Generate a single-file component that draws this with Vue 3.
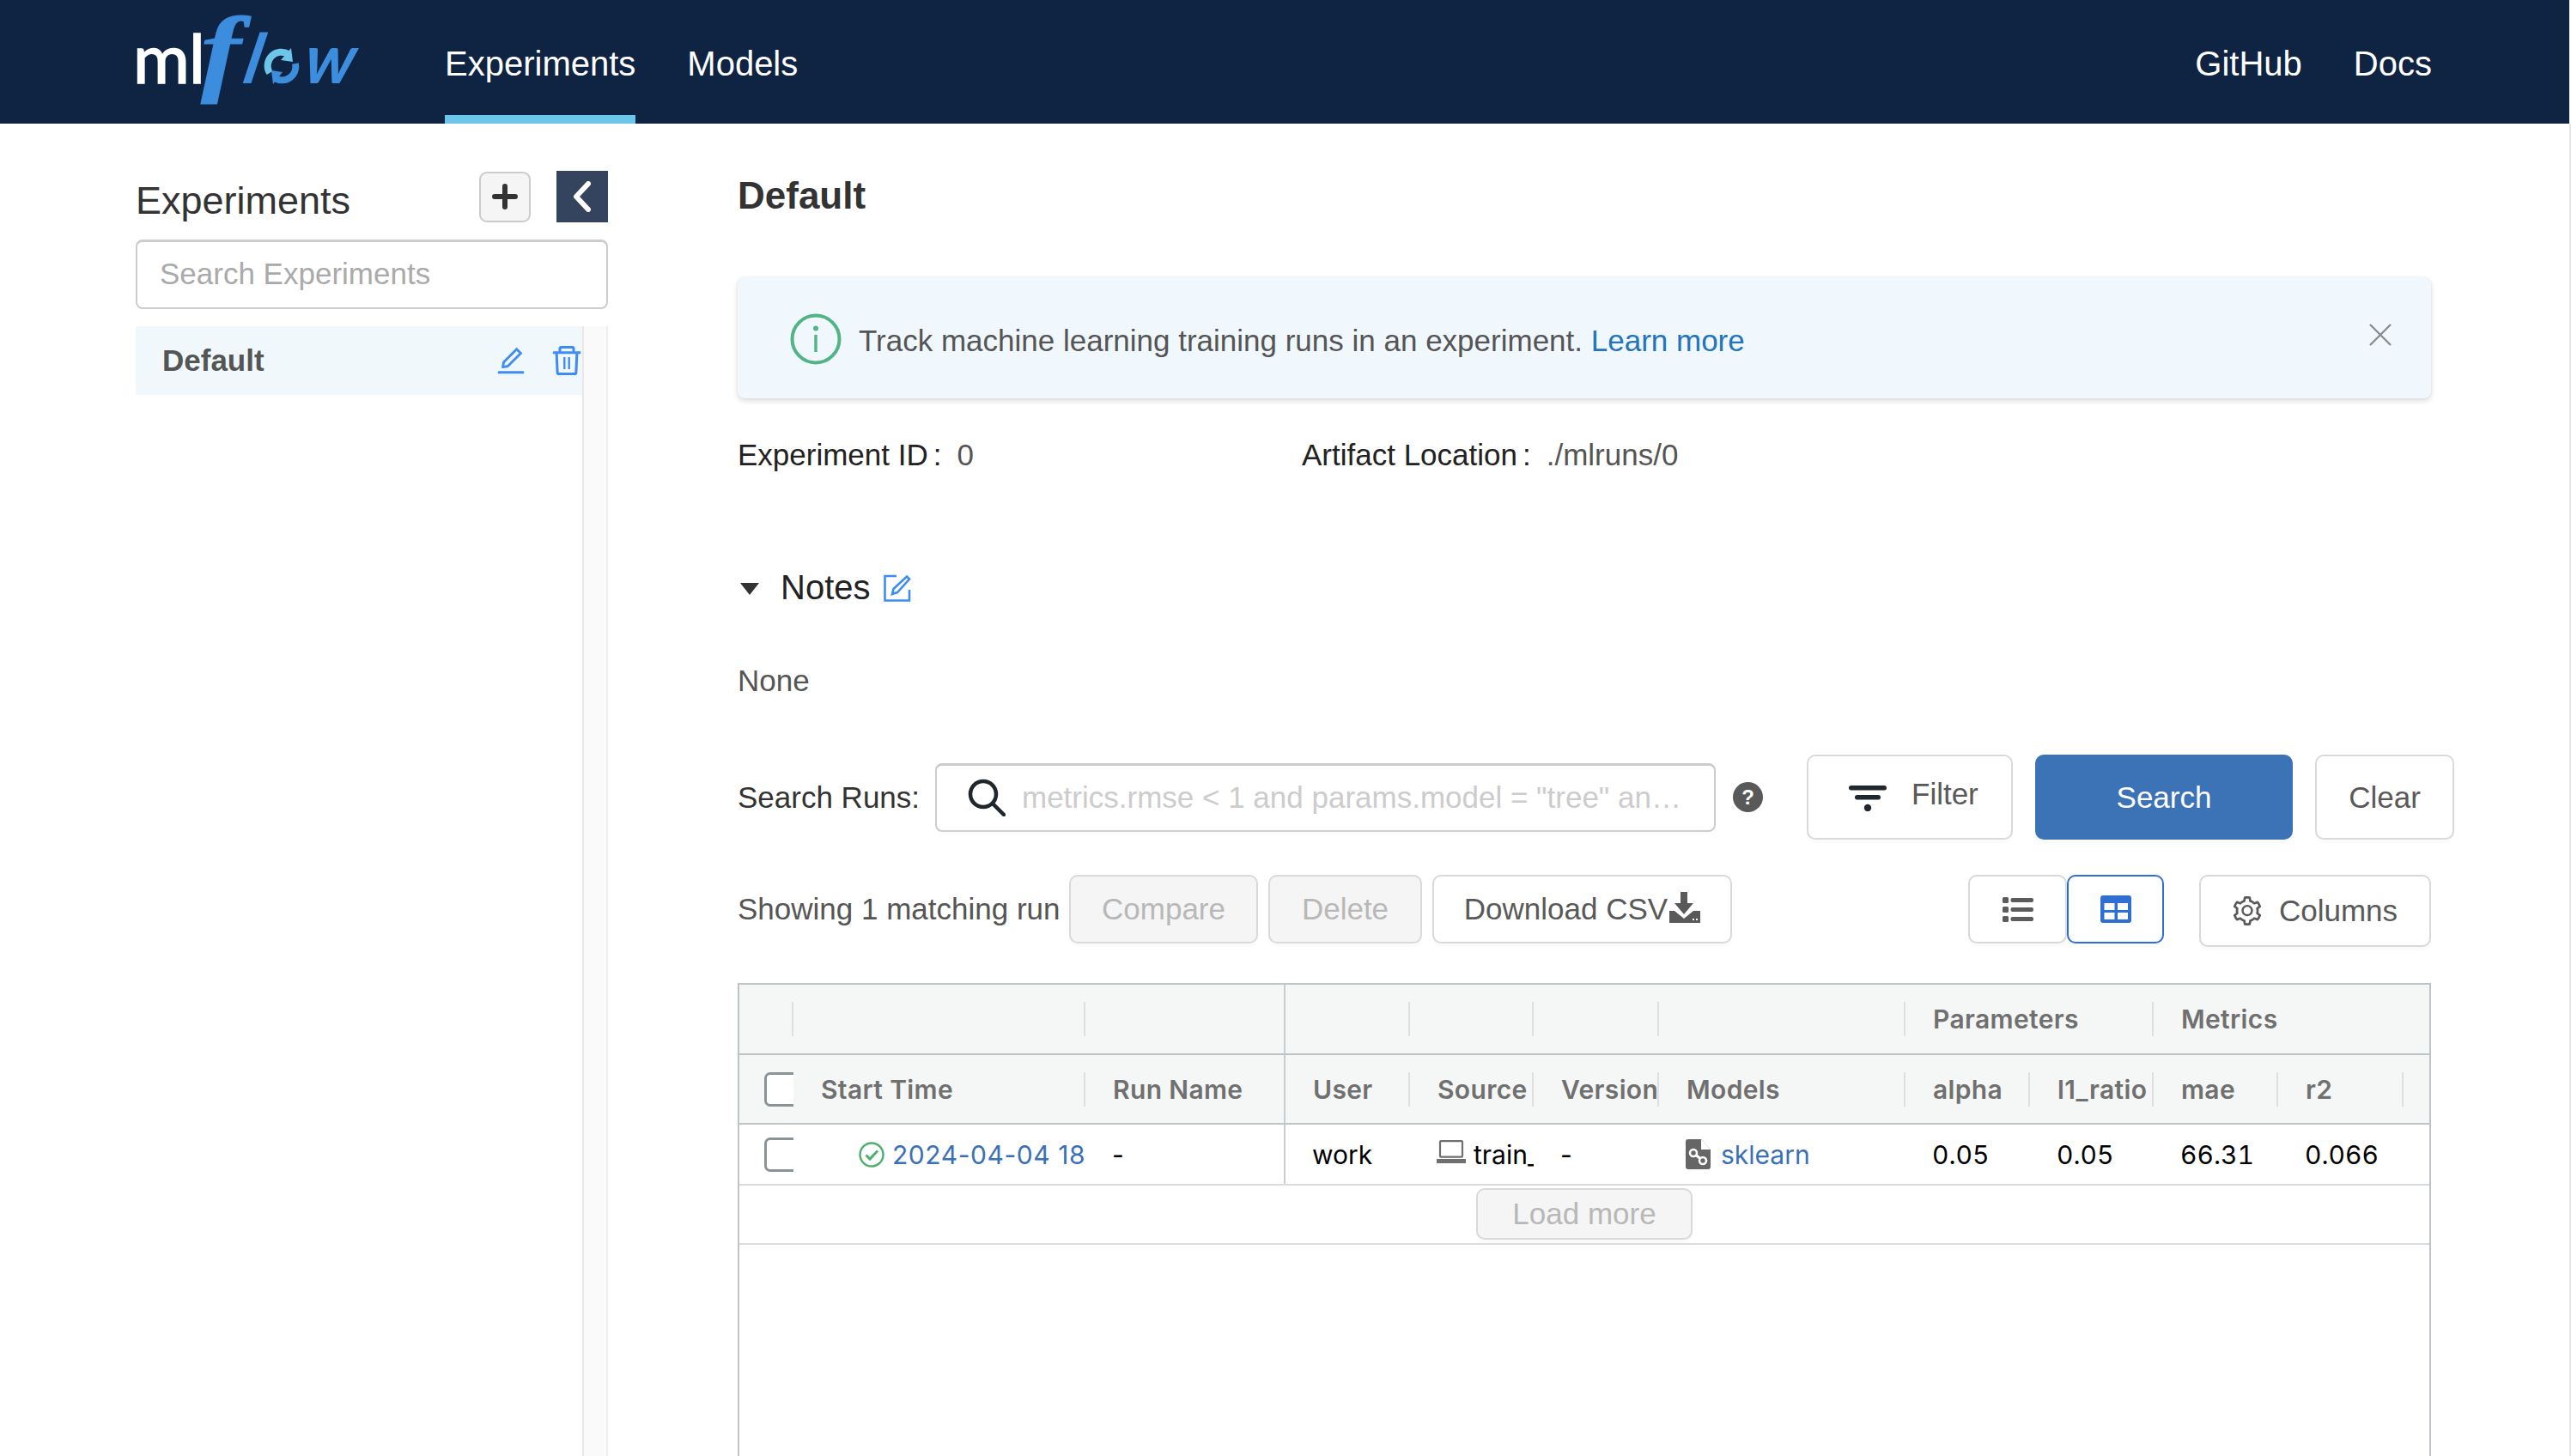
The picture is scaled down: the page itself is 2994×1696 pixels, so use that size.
<script setup>
const cols = [63, 340, 233, 145, 144, 146, 287, 145, 144, 145, 146, 32]
const gridCols = cols.map((c) => c + 'px').join(' ')
const groupRow = [
  { span: 1, sep: true },
  { span: 1, sep: true },
  { span: 1, pin: true },
  { span: 1, sep: true },
  { span: 1, sep: true },
  { span: 1, sep: true },
  { span: 1, sep: true },
  { span: 2, sep: true, label: 'Parameters' },
  { span: 3, label: 'Metrics' }
]
const headRow = [
  { label: 'Start Time', sep: true },
  { label: 'Run Name', pin: true },
  { label: 'User', sep: true },
  { label: 'Source', sep: true },
  { label: 'Version', sep: true },
  { label: 'Models', sep: true },
  { label: 'alpha', sep: true },
  { label: 'l1_ratio', sep: true },
  { label: 'mae', sep: true },
  { label: 'r2', sep: true },
  { label: '' }
]
const values = ['0.05', '0.05', '66.31', '0.066']
</script>

<template>
  <div class="page">
    <header class="topbar">
      <svg class="logo" viewBox="158 0 262 144" width="262" height="144">
        <text x="155" y="97" font-family="Lato" font-size="80" font-weight="400" fill="#fff" stroke="#fff" stroke-width="1.6" textLength="84">ml</text>
        <text transform="translate(234 97) scale(1.25 1)" font-family="Liberation Serif" font-style="italic" font-size="112" font-weight="700" fill="#3c8ddd" stroke="#3c8ddd" stroke-width="1">f</text>
        <text transform="translate(281 97) skewX(-12)" font-family="Lato" font-style="italic" font-weight="700" font-size="80" fill="#3c8ddd">l</text>
        <path d="M336 63A16 16 0 0 0 314 85" fill="none" stroke="#6cc6ea" stroke-width="8" />
        <path d="M320 91A16 16 0 0 0 344 74" fill="none" stroke="#3c8ddd" stroke-width="8" />
        <polygon points="327,70 339,56 341,72" fill="#6cc6ea" />
        <polygon points="329,84 318,98 316,82" fill="#3c8ddd" />
        <text transform="translate(352 97) skewX(-8)" font-family="Lato" font-style="italic" font-weight="700" font-size="80" fill="#3c8ddd" textLength="70">w</text>
      </svg>
      <nav class="nav">
        <a class="nav-item active">Experiments</a>
        <a class="nav-item">Models</a>
      </nav>
      <nav class="nav nav-right">
        <a class="nav-item">GitHub</a>
        <a class="nav-item">Docs</a>
      </nav>
    </header>

    <div class="body">
      <aside class="sidebar">
        <div class="side-head">
          <span class="side-title">Experiments</span>
          <button class="plus">
            <svg viewBox="0 0 30 30" width="30" height="30"><path d="M15 3v24M3 15h24" stroke="#333" stroke-width="6" stroke-linecap="round" /></svg>
          </button>
          <button class="collapse">
            <svg viewBox="0 0 24 36" width="24" height="36"><path d="M19 3 5 18l14 15" fill="none" stroke="#fff" stroke-width="6" stroke-linecap="round" stroke-linejoin="round" /></svg>
          </button>
        </div>
        <div class="side-search">Search Experiments</div>
        <div class="side-list">
          <div class="side-row">
            <span class="side-name">Default</span>
            <svg class="edit-ic" viewBox="64 64 896 896" width="34" height="34" fill="#3f8cf6"><path d="M257.7 752c2 0 4-.2 6-.5L431.9 722c2-.4 3.9-1.3 5.3-2.8l423.9-423.9a9.96 9.96 0 0 0 0-14.1L694.9 114.9c-1.9-1.9-4.4-2.9-7.1-2.9s-5.2 1-7.1 2.9L256.8 538.8c-1.5 1.5-2.4 3.3-2.8 5.3l-29.5 168.2a33.5 33.5 0 0 0 9.4 29.8c6.6 6.4 14.9 9.9 23.8 9.9zm67.4-174.4L687.8 215l73.3 73.3-362.7 362.6-88.9 15.7 15.6-89zM880 836H144c-17.7 0-32 14.3-32 32v36c0 4.4 3.6 8 8 8h784c4.4 0 8-3.6 8-8v-36c0-17.7-14.3-32-32-32z" /></svg>
            <svg class="trash-ic" viewBox="64 64 896 896" width="38" height="38" fill="#3f8cf6"><path d="M360 184h-8c4.4 0 8-3.6 8-8v8h304v-8c0 4.4 3.6 8 8 8h-8v72h72v-80c0-35.3-28.7-64-64-64H352c-35.3 0-64 28.7-64 64v80h72v-72zm504 72H160c-17.7 0-32 14.3-32 32v32c0 4.4 3.6 8 8 8h60.4l24.7 523c1.6 34.1 29.8 61 63.9 61h454c34.2 0 62.3-26.8 63.9-61l24.7-523H888c4.4 0 8-3.6 8-8v-36c0-17.7-14.3-32-32-32zM731.3 840H292.7l-24.2-512h487l-24.2 512z" /><path d="M420 420h56v330h-56zM548 420h56v330h-56z" /></svg>
          </div>
          <div class="side-track"></div>
        </div>
      </aside>

      <main class="main">
        <h1 class="title">Default</h1>

        <div class="alert">
          <svg class="alert-ic" viewBox="0 0 60 60" width="60" height="60">
            <circle cx="30" cy="30" r="27.5" fill="none" stroke="#52b385" stroke-width="4" />
            <circle cx="30" cy="17.5" r="3" fill="#52b385" />
            <rect x="28.3" y="25" width="3.4" height="20" fill="#52b385" />
          </svg>
          <span class="alert-text">Track machine learning training runs in an experiment. <a class="alert-link">Learn more</a></span>
          <svg class="alert-close" viewBox="0 0 26 26" width="26" height="26"><path d="M1 1l24 24M25 1 1 25" stroke="#8c8c8c" stroke-width="2.4" /></svg>
        </div>

        <div class="info">
          <div class="info-a">
            <span class="info-k">Experiment ID</span><span class="info-c">:</span><span class="info-v">0</span>
          </div>
          <div class="info-b">
            <span class="info-k">Artifact Location</span><span class="info-c">:</span><span class="info-v">./mlruns/0</span>
          </div>
        </div>

        <div class="notes">
          <svg class="caret" viewBox="0 0 22 14" width="22" height="14"><path d="M0 0h22L11 14z" fill="#333" /></svg>
          <span class="notes-t">Notes</span>
          <svg class="notes-ic" viewBox="0 0 32 32" width="32" height="32" fill="none" stroke="#3f8cf6" stroke-width="2.6">
            <path d="M15 2H1.5v28.5H30V18" />
            <path d="M27 2.5l3 3L16 21l-6 2 1.5-6z" />
          </svg>
        </div>

        <div class="none">None</div>

        <div class="search-row">
          <span class="search-label">Search Runs:</span>
          <div class="search-box">
            <svg class="search-ic" viewBox="0 0 44 44" width="44" height="44" fill="none" stroke="#1f272d" stroke-width="4.5">
              <circle cx="18" cy="18" r="15" />
              <path d="M29 29l13 13" stroke-linecap="round" />
            </svg>
            <span class="search-ph">metrics.rmse &lt; 1 and params.model = "tree" an…</span>
          </div>
          <span class="help">?</span>
          <button class="btn filter">
            <svg viewBox="0 0 44 30" width="44" height="30" fill="#20272d">
              <rect x="0" y="0" width="44" height="5.5" rx="2.7" />
              <rect x="7" y="11" width="30" height="5.5" rx="2.7" />
              <circle cx="22" cy="26" r="4.2" />
            </svg>
            <span class="filter-t">Filter</span>
          </button>
          <button class="btn primary">Search</button>
          <button class="btn clear">Clear</button>
        </div>

        <div class="tool-row">
          <span class="showing">Showing 1 matching run</span>
          <button class="btn disabled compare">Compare</button>
          <button class="btn disabled del">Delete</button>
          <button class="btn download">
            <span>Download CSV</span>
            <svg viewBox="0 0 36 36" width="36" height="36" fill="#595959">
              <path d="M13 0h8v13h7L17 26 6 13h7z" />
              <path d="M0 22h6l11 9 11-9h8v14H0z" />
              <rect x="27" y="31" width="2" height="2" fill="#fff" />
              <rect x="31" y="31" width="2" height="2" fill="#fff" />
            </svg>
          </button>
          <button class="btn toggle list">
            <svg viewBox="0 0 36 30" width="36" height="30" fill="#5c5c5c">
              <rect x="0" y="1" width="7" height="7" rx="1.5" /><rect x="9.5" y="2" width="26.5" height="5" rx="2" />
              <rect x="0" y="12" width="7" height="7" rx="1.5" /><rect x="9.5" y="13" width="26.5" height="5" rx="2" />
              <rect x="0" y="23" width="7" height="7" rx="1.5" /><rect x="9.5" y="24" width="26.5" height="5" rx="2" />
            </svg>
          </button>
          <button class="btn toggle table-t">
            <svg viewBox="0 0 36 32" width="36" height="32">
              <rect width="36" height="32" rx="3" fill="#2e6fd6" />
              <rect x="4.5" y="9" width="12" height="8" fill="#fff" />
              <rect x="20" y="9" width="12" height="8" fill="#fff" />
              <rect x="4.5" y="20" width="12" height="8" fill="#fff" />
              <rect x="20" y="20" width="12" height="8" fill="#fff" />
            </svg>
          </button>
          <button class="btn columns">
            <svg viewBox="64 64 896 896" width="34" height="34" fill="#595959"><path d="M924.8 625.7l-65.5-56c3.1-19 4.7-38.4 4.7-57.8s-1.6-38.8-4.7-57.8l65.5-56a32.03 32.03 0 0 0 9.3-35.2l-.9-2.6a443.74 443.74 0 0 0-79.7-137.9l-1.8-2.1a32.12 32.12 0 0 0-35.1-9.5l-81.3 28.9c-30-24.6-63.5-44-99.7-57.6l-15.7-85a32.05 32.05 0 0 0-25.8-25.7l-2.7-.5c-52.1-9.4-106.9-9.4-159 0l-2.7.5a32.05 32.05 0 0 0-25.8 25.7l-15.8 85.4a351.86 351.86 0 0 0-99 57.4l-81.9-29.1a32 32 0 0 0-35.1 9.5l-1.8 2.1a446.02 446.02 0 0 0-79.7 137.9l-.9 2.6c-4.5 12.5-.8 26.5 9.3 35.2l66.3 56.6c-3.1 18.8-4.6 38-4.6 57.1 0 19.2 1.5 38.4 4.6 57.1L99 625.5a32.03 32.03 0 0 0-9.3 35.2l.9 2.6c18.1 50.4 44.9 96.9 79.7 137.9l1.8 2.1a32.12 32.12 0 0 0 35.1 9.5l81.9-29.1c29.8 24.5 63.1 43.9 99 57.4l15.8 85.4a32.05 32.05 0 0 0 25.8 25.7l2.7.5a449.4 449.4 0 0 0 159 0l2.7-.5a32.05 32.05 0 0 0 25.8-25.7l15.7-85a350 350 0 0 0 99.7-57.6l81.3 28.9a32 32 0 0 0 35.1-9.5l1.8-2.1c34.8-41.1 61.6-87.5 79.7-137.9l.9-2.6c4.5-12.3.8-26.3-9.3-35zM788.3 465.9c2.5 15.1 3.8 30.6 3.8 46.1s-1.3 31-3.8 46.1l-6.6 40.1 74.7 63.9a370.03 370.03 0 0 1-42.6 73.6L721 702.8l-31.4 25.8c-23.9 19.6-50.5 35-79.3 45.8l-38.1 14.3-17.9 97a377.5 377.5 0 0 1-85 0l-17.9-97.2-37.8-14.5c-28.5-10.8-55-26.2-78.7-45.7l-31.4-25.9-93.4 33.2c-17-22.9-31.2-47.6-42.6-73.6l75.5-64.5-6.5-40c-2.4-14.9-3.7-30.3-3.7-45.5 0-15.3 1.2-30.6 3.7-45.5l6.5-40-75.5-64.5c11.3-26.1 25.6-50.7 42.6-73.6l93.4 33.2 31.4-25.9c23.7-19.5 50.2-34.9 78.7-45.7l37.9-14.3 17.9-97.2c28.1-3.2 56.8-3.2 85 0l17.9 97 38.1 14.3c28.7 10.8 55.4 26.2 79.3 45.8l31.4 25.8 92.8-32.9c17 22.9 31.2 47.6 42.6 73.6L781.8 426l6.5 39.9zM512 326c-97.2 0-176 78.8-176 176s78.8 176 176 176 176-78.8 176-176-78.8-176-176-176zm79.2 255.2A111.6 111.6 0 0 1 512 614c-29.9 0-58-11.7-79.2-32.8A111.6 111.6 0 0 1 400 502c0-29.9 11.7-58 32.8-79.2C454 401.6 482.1 390 512 390c29.9 0 58 11.6 79.2 32.8A111.6 111.6 0 0 1 624 502c0 29.9-11.7 58-32.8 79.2z" /></svg>
            <span>Columns</span>
          </button>
        </div>

        <section class="grid">
          <div class="row head-row group" :style="{ gridTemplateColumns: gridCols }">
            <div
              v-for="(g, i) in groupRow"
              :key="i"
              class="cell"
              :class="{ sep: g.sep, pin: g.pin }"
              :style="{ gridColumn: 'span ' + g.span }"
            >{{ g.label }}</div>
          </div>
          <div class="row head-row labels" :style="{ gridTemplateColumns: gridCols }">
            <div class="cell check"><span class="box"></span></div>
            <div
              v-for="h in headRow"
              :key="h.label"
              class="cell"
              :class="{ sep: h.sep, pin: h.pin }"
            >{{ h.label }}</div>
          </div>
          <div class="row data-row" :style="{ gridTemplateColumns: gridCols }">
            <div class="cell check"><span class="box small"></span></div>
            <div class="cell time">
              <svg viewBox="0 0 30 30" width="30" height="30" fill="none" stroke="#4fb06d" stroke-width="2.4">
                <circle cx="15" cy="15" r="13.5" />
                <path d="M8.5 15.5l4.5 4.5 9-9.5" stroke-width="3" />
              </svg>
              <a class="link date">2024-04-04 18</a>
            </div>
            <div class="cell pin">-</div>
            <div class="cell">work</div>
            <div class="cell source">
              <svg viewBox="0 0 34 28" width="34" height="28" fill="none" stroke="#6f6f6f" stroke-width="2.2">
                <rect x="4" y="1.2" width="26" height="18.5" rx="1" />
                <path d="M0 24.5h34" stroke-width="5" />
              </svg>
              <span class="src-name">train_</span>
            </div>
            <div class="cell">-</div>
            <div class="cell models">
              <svg viewBox="0 0 29 35" width="29" height="35">
                <path d="M3 0h15l11 12v20a3 3 0 0 1-3 3H3a3 3 0 0 1-3-3V3a3 3 0 0 1 3-3z" fill="#666" />
                <path d="M18 0v12h11z" fill="#fff" />
                <path d="M9 16l11 9" stroke="#fff" stroke-width="3" />
                <circle cx="9" cy="16" r="4" fill="#666" stroke="#fff" stroke-width="2.6" />
                <circle cx="20" cy="25" r="4" fill="#666" stroke="#fff" stroke-width="2.6" />
              </svg>
              <a class="link">sklearn</a>
            </div>
            <div v-for="(v, i) in values" :key="i" class="cell num">{{ v }}</div>
            <div class="cell"></div>
          </div>
          <div class="load-row">
            <button class="btn disabled load">Load more</button>
          </div>
        </section>
      </main>
    </div>
  </div>
</template>

<style>
html,
body {
  margin: 0;
  background: #fff;
}
</style>

<style scoped>
.page {
  width: 2994px;
  height: 1696px;
  overflow: hidden;
  font-family: "Liberation Sans", Arial, sans-serif;
  font-size: 35px;
  color: #333;
  background: #fff;
  box-sizing: border-box;
}
.topbar {
  width: 2992px;
  height: 144px;
  background: #0f2342;
  display: flex;
  box-sizing: border-box;
  padding-left: 158px;
  padding-right: 160px;
}
.logo {
  flex: none;
  display: block;
}
.nav {
  display: flex;
  gap: 60px;
  margin-left: 98px;
}
.nav-right {
  margin-left: auto;
}
.nav-item {
  display: block;
  height: 144px;
  box-sizing: border-box;
  padding-top: 14px;
  line-height: 120px;
  border-bottom: 10px solid transparent;
  color: #fff;
  font-size: 40px;
}
.nav-item.active {
  border-bottom-color: #6cc5ea;
}
.body {
  display: flex;
  height: 1552px;
  border-right: 2px solid #e4e4e4;
  box-sizing: border-box;
}
.sidebar {
  flex: none;
  width: 550px;
  margin-left: 158px;
  display: flex;
  flex-direction: column;
}
.side-head {
  flex: none;
  display: flex;
  align-items: center;
  height: 60px;
  margin-top: 55px;
}
.side-title {
  font-size: 45px;
  flex: 1;
  padding-top: 10px;
  color: #333;
}
button {
  font-family: inherit;
  padding: 0;
  margin: 0;
  cursor: pointer;
}
.plus {
  width: 60px;
  height: 59px;
  border: 2px solid #ccc;
  border-radius: 9px;
  background: #f5f5f5;
  display: flex;
  align-items: center;
  justify-content: center;
}
.collapse {
  width: 60px;
  height: 60px;
  margin-left: 30px;
  border: none;
  background: #34435e;
  display: flex;
  align-items: center;
  justify-content: center;
}
.side-search {
  flex: none;
  margin-top: 20px;
  height: 81px;
  box-sizing: border-box;
  border: 2px solid #ccc;
  border-top-width: 3px;
  border-radius: 8px;
  padding-left: 26px;
  line-height: 73px;
  color: #aaa;
  font-size: 35px;
}
.side-list {
  display: flex;
  flex: 1;
  margin-top: 20px;
  align-items: flex-start;
  min-height: 0;
}
.side-row {
  flex: 1;
  height: 80px;
  display: flex;
  align-items: center;
  background: #f0f8fb;
  padding-left: 31px;
  box-sizing: border-box;
}
.side-name {
  flex: 1;
  font-weight: 700;
  font-size: 35px;
  color: #555;
}
.edit-ic {
  margin-right: 29px;
  flex: none;
}
.trash-ic {
  margin-right: -1px;
  flex: none;
}
.side-track {
  flex: none;
  width: 30px;
  height: 1400px;
  box-sizing: border-box;
  background: #fafafa;
  border-left: 2px solid #e8e8e8;
  border-right: 2px solid #eee;
}
.main {
  flex: none;
  width: 1972px;
  margin-left: 151px;
}
.title {
  margin: 54px 0 0;
  height: 60px;
  line-height: 60px;
  font-size: 44px;
  font-weight: 700;
  color: #333;
}
.alert {
  margin-top: 65px;
  height: 141px;
  background: #f0f8fe;
  border-radius: 8px;
  box-shadow: 0 3px 6px rgba(0, 0, 0, 0.14), 0 0 2px rgba(0, 0, 0, 0.08);
  display: flex;
  align-items: center;
  padding: 3px 46px 0 61px;
  box-sizing: border-box;
}
.alert-ic {
  flex: none;
}
.alert-text {
  margin-left: 20px;
  margin-top: 3px;
  color: #555;
  flex: 1;
  font-size: 35px;
}
.alert-link {
  color: #2374bb;
}
.alert-close {
  flex: none;
  margin-top: -10px;
}
.info {
  display: flex;
  margin-top: 46px;
  height: 40px;
  line-height: 40px;
}
.info-a {
  width: 657px;
}
.info-k {
  color: #222;
}
.info-c {
  color: #222;
  margin-left: 6px;
}
.info-v {
  color: #555;
  margin-left: 18px;
}
.notes {
  display: flex;
  align-items: center;
  margin-top: 114px;
  height: 40px;
}
.caret {
  margin-left: 3px;
  margin-top: 3px;
  flex: none;
}
.notes-t {
  margin-left: 25px;
  font-size: 40px;
  color: #222;
}
.notes-ic {
  margin-left: 15px;
  margin-top: 1px;
}
.none {
  margin-top: 69px;
  height: 40px;
  line-height: 40px;
  color: #555;
}
.search-row {
  display: flex;
  align-items: center;
  margin-top: 66px;
  height: 99px;
  width: 2000px;
}
.search-label {
  flex: none;
  width: 230px;
  color: #333;
}
.search-box {
  flex: none;
  width: 909px;
  height: 80px;
  box-sizing: border-box;
  border: 2px solid #ccc;
  border-top-width: 3px;
  border-radius: 8px;
  display: flex;
  align-items: center;
  padding-left: 36px;
}
.search-ic {
  flex: none;
}
.search-ph {
  margin-left: 19px;
  color: #ccc;
  white-space: nowrap;
}
.help {
  flex: none;
  width: 35px;
  height: 35px;
  margin-left: 20px;
  border-radius: 50%;
  background: #595959;
  color: #fff;
  font-size: 24px;
  font-weight: 700;
  line-height: 35px;
  text-align: center;
}
.btn {
  flex: none;
  box-sizing: border-box;
  border: 2px solid #d9d9d9;
  border-radius: 10px;
  background: #fff;
  color: #595959;
  font-size: 35px;
  box-shadow: 0 4px 0 rgba(0, 0, 0, 0.015);
  display: flex;
  align-items: center;
  justify-content: center;
}
.filter {
  width: 240px;
  height: 99px;
  margin-left: 51px;
  justify-content: flex-start;
  padding-left: 47px;
}
.filter svg {
  margin-top: 2px;
}
.filter-t {
  margin-left: 29px;
  margin-top: -8px;
}
.primary {
  width: 300px;
  height: 99px;
  margin-left: 26px;
  background: #3c72b6;
  border-color: #3c72b6;
  color: #fff;
}
.clear {
  width: 162px;
  height: 99px;
  margin-left: 26px;
}
.tool-row {
  display: flex;
  align-items: flex-start;
  margin-top: 41px;
  height: 80px;
}
.showing {
  flex: none;
  width: 386px;
  line-height: 80px;
  color: #555;
}
.disabled {
  background: #f5f5f5;
  color: #b8b8b8;
}
.compare {
  width: 220px;
  height: 80px;
}
.del {
  width: 179px;
  height: 80px;
  margin-left: 12px;
}
.download {
  width: 349px;
  height: 80px;
  margin-left: 12px;
}
.download svg {
  margin-left: 2px;
  margin-top: -4px;
}
.toggle {
  height: 80px;
}
.list {
  width: 115px;
  margin-left: auto;
}
.table-t {
  width: 113px;
  border-color: #2e6fd6;
}
.columns {
  width: 270px;
  height: 84px;
  margin-left: 41px;
  gap: 20px;
}
.grid {
  margin-top: 46px;
  height: 560px;
  border: 2px solid #bdc3c7;
  border-bottom: none;
  font-family: Inter, Roboto, sans-serif;
  font-size: 30px;
  box-sizing: border-box;
}
.row {
  display: grid;
  box-sizing: border-box;
}
.head-row {
  background: #f5f7f6;
  border-bottom: 2px solid #bdc3c7;
  color: #707070;
  font-weight: 600;
  letter-spacing: 0.35px;
}
.head-row .cell {
  padding-left: 32px;
}
.head-row .check {
  padding-left: 29px;
}
.group {
  height: 82px;
}
.labels {
  height: 81px;
}
.data-row {
  height: 71px;
  border-bottom: 2px solid #d9dcde;
  color: #000;
}
.cell {
  position: relative;
  display: flex;
  align-items: center;
  padding-left: 31px;
  white-space: nowrap;
  overflow: hidden;
  box-sizing: border-box;
}
.num {
  font-variant-numeric: tabular-nums;
}
.sep::after {
  content: "";
  position: absolute;
  right: 0;
  top: 20px;
  height: 40px;
  width: 2px;
  background: #dde0e1;
}
.pin {
  border-right: 2px solid #c8cdcf;
}
.check {
  padding-left: 29px;
}
.box {
  flex: none;
  width: 44px;
  height: 40px;
  box-sizing: border-box;
  border: 3px solid #8a9396;
  border-radius: 7px;
  background: #fff;
}
.box.small {
  background: transparent;
}
.time {
  padding-left: 76px;
  gap: 9px;
}
.date {
  letter-spacing: 0.55px;
}
.time svg,
.source svg,
.models svg {
  flex: none;
}
.link {
  color: #3a70b6;
}
.source {
  gap: 9px;
}
.source svg {
  margin-top: -6px;
}
.models {
  gap: 12px;
}
.load-row {
  height: 69px;
  border-bottom: 2px solid #d9dcde;
  display: flex;
  align-items: center;
  justify-content: center;
  box-sizing: border-box;
  padding-bottom: 2px;
}
.load {
  width: 252px;
  height: 60px;
  font-family: "Liberation Sans", Arial, sans-serif;
}
</style>
